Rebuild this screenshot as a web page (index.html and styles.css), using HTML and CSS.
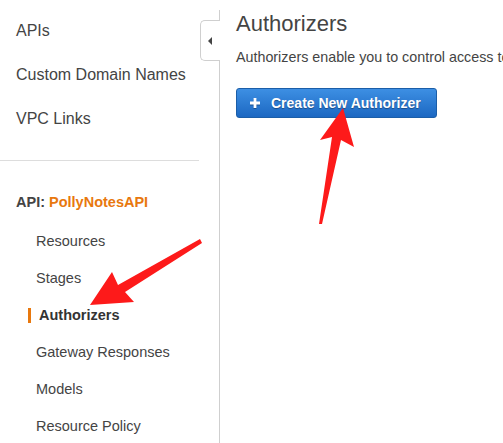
FILE: index.html
```html
<!DOCTYPE html>
<html>
<head>
<meta charset="utf-8">
<link rel="stylesheet" href="styles.css">
</head>
<body>
<div class="page">
  <aside class="sidebar">
    <ul class="top-nav">
      <li>APIs</li>
      <li>Custom Domain Names</li>
      <li>VPC Links</li>
    </ul>
    <div class="divider"></div>
    <div class="api-title">API: <span class="api-name">PollyNotesAPI</span></div>
    <ul class="sub-nav">
      <li>Resources</li>
      <li>Stages</li>
      <li class="active">Authorizers</li>
      <li>Gateway Responses</li>
      <li>Models</li>
      <li>Resource Policy</li>
    </ul>
  </aside>
  <main class="main">
    <div class="toggle"><span class="tri"></span></div>
    <h1 class="title">Authorizers</h1>
    <p class="desc">Authorizers enable you to control access to</p>
    <button class="btn"><svg class="plus" width="10" height="10" viewBox="0 0 10 10"><path d="M5 0V10M0 5H10" stroke="#fff" stroke-width="2.8"/></svg>Create New Authorizer</button>
  </main>
  <svg class="annot" width="503" height="443" viewBox="0 0 503 443">
    <polygon points="90,305 112,272 118,285 200,239 202,243 125,292 134,302" fill="#fd1a1a"/>
    <polygon points="343,108 354,147 341,140 322,224 319,224 332,137 320,140" fill="#fd1a1a"/>
  </svg>
</div>
</body>
</html>
```

FILE: styles.css
```css
html, body {
  margin: 0;
  padding: 0;
  background: #fff;
}
body {
  font-family: "Liberation Sans", Arial, Helvetica, sans-serif;
  color: #444;
  overflow: hidden;
}
.page {
  position: relative;
  display: flex;
  width: 503px;
  height: 443px;
  overflow: hidden;
}
.sidebar {
  width: 200px;
  flex: 0 0 200px;
  padding-top: 9px;
}
.top-nav, .sub-nav {
  list-style: none;
  margin: 0;
  padding: 0;
}
.top-nav li {
  height: 44px;
  line-height: 44px;
  padding-left: 16px;
  font-size: 16px;
  color: #444;
}
.divider {
  margin-top: 19px;
  height: 1px;
  background: #ddd;
  width: 199px;
}
.api-title {
  margin-top: 21px;
  height: 40px;
  line-height: 40px;
  padding-left: 16px;
  font-size: 14.5px;
  font-weight: bold;
  color: #444;
}
.api-name {
  color: #e8780e;
}
.sub-nav {
  margin-top: 1px;
}
.sub-nav li {
  height: 37px;
  line-height: 37px;
  padding-left: 36px;
  font-size: 14.5px;
  color: #444;
  position: relative;
}
.sub-nav li.active {
  font-weight: bold;
  padding-left: 39px;
  color: #333;
}
.sub-nav li.active::before {
  content: "";
  position: absolute;
  left: 28px;
  top: 11px;
  width: 3px;
  height: 15px;
  background: #e8780e;
}
.main {
  position: relative;
  margin-left: 19px;
  margin-top: 10px;
  border-left: 1px solid #cfcfcf;
  flex: 1;
  min-width: 0;
  padding-left: 16px;
  white-space: nowrap;
}
.toggle {
  position: absolute;
  left: -20px;
  top: 10px;
  width: 19px;
  height: 39px;
  border: 1px solid #cfcfcf;
  border-right: none;
  border-radius: 5px 0 0 5px;
  background: #fff;
}
.tri {
  position: absolute;
  left: 7px;
  top: 16px;
  width: 0;
  height: 0;
  border-top: 4px solid transparent;
  border-bottom: 4px solid transparent;
  border-right: 4px solid #444;
}
.title {
  margin: 0;
  padding-top: 1px;
  font-size: 22px;
  line-height: 26px;
  font-weight: normal;
  color: #444;
}
.desc {
  margin: 10px 0 0 0;
  font-size: 14.3px;
  line-height: 20px;
  color: #444;
}
.btn {
  margin-top: 21px;
  display: flex;
  align-items: center;
  width: 201px;
  height: 30px;
  padding: 0 0 0 13px;
  border: 1px solid #1b5ea8;
  border-radius: 3px;
  background: linear-gradient(#3d8fe3, #1c68c2);
  color: #fff;
  font-family: "Liberation Sans", Arial, sans-serif;
  font-size: 14px;
  font-weight: bold;
  text-shadow: 0 1px 1px rgba(0,0,0,0.35);
  box-sizing: border-box;
}
.plus {
  margin-right: 11px;
  flex: 0 0 10px;
  filter: drop-shadow(0 1px 0 rgba(0,0,0,0.3));
}
.annot {
  position: absolute;
  left: 0;
  top: 0;
  pointer-events: none;
}
```
